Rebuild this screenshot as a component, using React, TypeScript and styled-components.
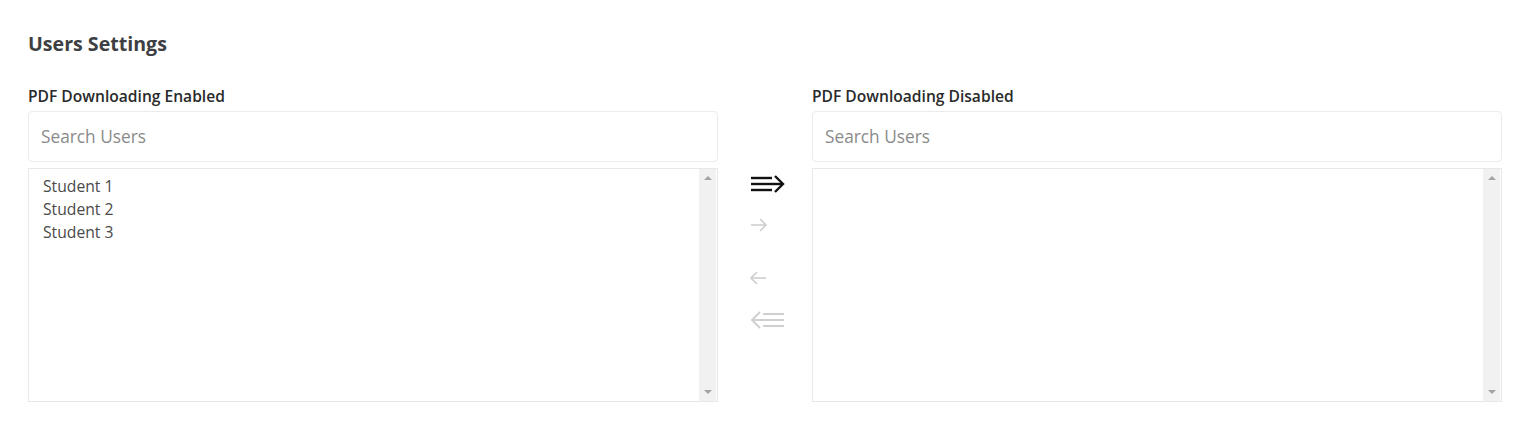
import React from "react";
import styled, { createGlobalStyle } from "styled-components";

const Global = createGlobalStyle`
  html, body { margin: 0; padding: 0; background: #fff; }
  body { font-family: "Open Sans", "Noto Sans", Arial, sans-serif; }
`;

const Page = styled.div`
  padding: 30px 0 0 28px;
  width: 1474px;
`;

const Title = styled.h2`
  margin: 0 0 28px 0;
  font-size: 19.6px;
  font-weight: 700;
  color: #3d3f42;
  line-height: 28px;
`;

const Columns = styled.div`
  display: grid;
  grid-template-columns: 690px 94px 690px;
`;

const Panel = styled.div`
  display: flex;
  flex-direction: column;
`;

const Label = styled.label`
  font-size: 15.6px;
  font-weight: 600;
  color: #2a2a2a;
  line-height: 20px;
  margin-bottom: 5px;
`;

const Search = styled.input`
  box-sizing: border-box;
  height: 51px;
  width: 100%;
  border: 1px solid #ececec;
  border-radius: 4px;
  padding: 0 12px;
  font-family: inherit;
  font-size: 17.3px;
  color: #555;
  outline: none;
  &::placeholder { color: #8a8a8a; }
`;

const ListBox = styled.div`
  box-sizing: border-box;
  margin-top: 6px;
  height: 234px;
  border: 1px solid #e8e8e8;
  display: flex;
`;

const Items = styled.ul`
  flex: 1;
  list-style: none;
  margin: 0;
  padding: 6px 14px;
`;

const Item = styled.li`
  font-size: 15.7px;
  line-height: 23px;
  color: #4a4a4a;
`;

const Track = styled.div`
  width: 17px;
  margin-right: 1px;
  background: #f1f1f1;
  display: flex;
  flex-direction: column;
  justify-content: space-between;
  align-items: center;
  padding: 7px 0;
`;

const Tri = styled.span<{ $down?: boolean }>`
  width: 0;
  height: 0;
  border-left: 4px solid transparent;
  border-right: 4px solid transparent;
  ${(p) =>
    p.$down
      ? "border-top: 4px solid #a3a3a3;"
      : "border-bottom: 4px solid #a3a3a3;"}
`;

const Controls = styled.div`
  display: flex;
  flex-direction: column;
  padding: 88px 0 0 32px;
`;

const MoveButton = styled.button<{ $gap: number }>`
  background: none;
  border: none;
  padding: 0;
  margin-top: ${(p) => p.$gap}px;
  width: 36px;
  height: 20px;
  display: flex;
  align-items: center;
  cursor: pointer;
`;

const AllRight = ({ color }: { color: string }) => (
  <svg width="36" height="20" viewBox="0 0 36 20">
    <g stroke={color} strokeWidth="2.4" fill="none" strokeLinecap="butt">
      <line x1="1" y1="4" x2="22" y2="4" />
      <line x1="1" y1="10" x2="32" y2="10" />
      <line x1="1" y1="16" x2="22" y2="16" />
      <polyline points="25,2 33,10 25,18" strokeLinejoin="miter" />
    </g>
  </svg>
);

const AllLeft = ({ color }: { color: string }) => (
  <svg width="36" height="20" viewBox="0 0 36 20">
    <g stroke={color} strokeWidth="2" fill="none">
      <line x1="13" y1="4" x2="34" y2="4" />
      <line x1="3" y1="10" x2="34" y2="10" />
      <line x1="13" y1="16" x2="34" y2="16" />
      <polyline points="10,2 2,10 10,18" />
    </g>
  </svg>
);

const OneRight = ({ color }: { color: string }) => (
  <svg width="36" height="20" viewBox="0 0 36 20">
    <g stroke={color} strokeWidth="1.6" fill="none">
      <line x1="1" y1="10" x2="16" y2="10" />
      <polyline points="10,4 16,10 10,16" />
    </g>
  </svg>
);

const OneLeft = ({ color }: { color: string }) => (
  <svg width="36" height="20" viewBox="0 0 36 20">
    <g stroke={color} strokeWidth="1.6" fill="none">
      <line x1="1" y1="10" x2="16" y2="10" />
      <polyline points="7,4 1,10 7,16" />
    </g>
  </svg>
);

const Box = ({
  label,
  items,
}: {
  label: string;
  items: string[];
}) => (
  <Panel>
    <Label>{label}</Label>
    <Search placeholder="Search Users" />
    <ListBox>
      <Items>
        {items.map((i) => (
          <Item key={i}>{i}</Item>
        ))}
      </Items>
      <Track>
        <Tri />
        <Tri $down />
      </Track>
    </ListBox>
  </Panel>
);

export default function App() {
  return (
    <Page>
      <Global />
      <Title>Users Settings</Title>
      <Columns>
        <Box
          label="PDF Downloading Enabled"
          items={["Student 1", "Student 2", "Student 3"]}
        />
        <Controls>
          <MoveButton $gap={0} aria-label="Move all right">
            <AllRight color="#111" />
          </MoveButton>
          <MoveButton $gap={21} aria-label="Move right">
            <OneRight color="#cfcfcf" />
          </MoveButton>
          <MoveButton $gap={33} aria-label="Move left">
            <OneLeft color="#cfcfcf" />
          </MoveButton>
          <MoveButton $gap={22} aria-label="Move all left">
            <AllLeft color="#d0d0d0" />
          </MoveButton>
        </Controls>
        <Box label="PDF Downloading Disabled" items={[]} />
      </Columns>
    </Page>
  );
}
